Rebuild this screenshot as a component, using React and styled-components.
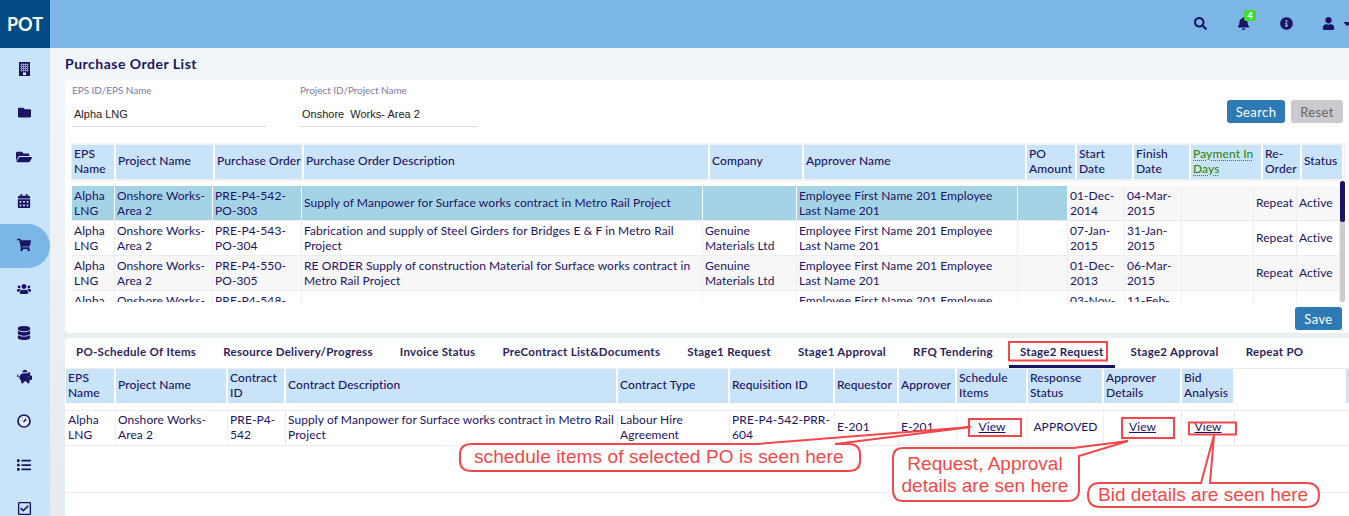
import React from 'react';
import styled, { createGlobalStyle } from 'styled-components';
import {
	FaFolder,
	FaFolderOpen,
	FaCalendarAlt,
	FaShoppingCart,
	FaUsers,
	FaDatabase,
	FaPiggyBank,
	FaList,
	FaRegCheckSquare,
	FaSearch,
	FaBell,
	FaInfoCircle,
	FaUser,
	FaCaretDown,
} from 'react-icons/fa';

const navy = '#1b1464';
const red = '#f4474a';

const GlobalStyle = createGlobalStyle`
	html, body {
		margin: 0;
		height: 516px;
		overflow: hidden;
		font-family: 'Lato', sans-serif;
		color: ${navy};
	}
	* {
		box-sizing: border-box;
	}
`;

const Page = styled.div`
	position: relative;
	display: grid;
	grid-template-columns: 50px 1fr;
	grid-template-rows: 48px 1fr;
	width: 1349px;
	height: 516px;
	overflow: hidden;
`;

const Logo = styled.div`
	display: flex;
	align-items: center;
	justify-content: center;
	background: #024b84;
	color: #fff;
	font-size: 18px;
	font-weight: 700;
`;

const TopBar = styled.header`
	display: flex;
	align-items: center;
	justify-content: flex-end;
	gap: 30px;
	margin-right: -5px;
	padding-bottom: 2px;
	background: #7cb6e7;
	font-size: 13px;
`;

const TopIcon = styled.span`
	position: relative;
	display: flex;
`;

const UserMenu = styled.span`
	display: flex;
	align-items: center;
	gap: 6px;
	margin-left: -1px;
`;

const Badge = styled.span`
	position: absolute;
	top: -7px;
	left: 7px;
	width: 12px;
	height: 11px;
	border-radius: 2px;
	background: #3fdc2c;
	color: #fff;
	font-size: 9px;
	font-weight: 700;
	line-height: 11px;
	text-align: center;
`;

const SideBar = styled.nav`
	background: #c9e4f9;
	overflow: hidden;
`;

const SideItem = styled.div`
	display: flex;
	align-items: center;
	justify-content: center;
	height: 44px;
	padding: 0 2px 3px 0;
	background: ${(p) => (p.$active ? '#7cb6e7' : 'transparent')};
	border-radius: ${(p) => (p.$active ? '0 22px 22px 0' : '0')};
`;

const Main = styled.main`
	min-width: 0;
	padding-left: 15px;
	background: linear-gradient(#f1f6f9, #e5ebee);
	overflow: hidden;
`;

const Title = styled.h1`
	height: 32px;
	margin: 0;
	padding-top: 7px;
	font-size: 14px;
	font-weight: 700;
	letter-spacing: 0.5px;
	line-height: 17px;
`;

const Panel = styled.section`
	background: #fff;
	border-radius: 4px 0 0 4px;
	margin-bottom: 5px;
	overflow: hidden;
	height: ${(p) => p.$height}px;
`;

const SearchRow = styled.div`
	display: flex;
	height: 63px;
	padding: 4px 6px 0 7px;
`;

const Field = styled.div`
	width: ${(p) => p.$width}px;
	margin-right: 34px;
`;

const FieldLabel = styled.div`
	color: #7d7ba8;
	font-size: 10px;
	letter-spacing: -0.05px;
	line-height: 12px;
`;

const FieldValue = styled.div`
	height: 25px;
	margin-top: 6px;
	padding: 5px 0 0 2px;
	border-bottom: 1px solid #dcdcdc;
	color: #222;
	font-family: 'Liberation Sans', sans-serif;
	font-size: 11px;
	line-height: 14px;
	white-space: pre;
`;

const Buttons = styled.div`
	display: flex;
	gap: 6px;
	margin: 16px 0 0 auto;
`;

const Button = styled.button`
	width: ${(p) => p.$width}px;
	height: 23px;
	padding: 0;
	border: 0;
	border-radius: 3px;
	background: ${(p) => (p.$muted ? '#c9cbd0' : '#2e7ab4')};
	color: ${(p) => (p.$muted ? '#666' : '#fff')};
	font-family: 'Lato', sans-serif;
	font-size: 13px;
	letter-spacing: 0.4px;
`;

const HeadWrap = styled.div`
	height: 38px;
	margin-left: 6px;
	width: 1275px;
	padding: 2px 0 2px 1px;
	background: #f2f2f2;
`;

const Row = styled.div`
	display: grid;
	grid-template-columns: ${(p) => p.$cols};
`;

const HeadCell = styled.div`
	display: flex;
	align-items: center;
	height: 34px;
	padding: 0 0 3px 2px;
	border-right: 2px solid #fff;
	background: #c9e4f9;
	font-size: 12px;
	font-weight: 500;
	letter-spacing: 0.1px;
	line-height: 15px;
	color: ${(p) => (p.$hint ? '#2e8b0e' : navy)};
`;

const Hint = styled.span`
	text-decoration: underline dotted #2e8b0e;
	text-underline-offset: 2px;
`;

const BodyArea = styled.div`
	display: flex;
	height: 121px;
	margin-left: 7px;
`;

const BodyScroll = styled.div`
	width: 1268px;
	padding-top: 5px;
	overflow: hidden;
`;

const BodyRow = styled(Row)`
	height: 35px;
	background: ${(p) => (p.$shade ? '#f7f7f7' : '#fff')};
	border-bottom: 1px solid #eee;
`;

const BodyCell = styled.div`
	display: flex;
	align-items: center;
	justify-content: ${(p) => (p.$center ? 'center' : 'flex-start')};
	height: 34px;
	padding: 0 0 1px ${(p) => (p.$center ? 0 : 2)}px;
	border-right: 1px solid ${(p) => (p.$selected ? '#fff' : '#eee')};
	background: ${(p) => (p.$selected ? '#a5d3e6' : 'transparent')};
	font-size: 12px;
	letter-spacing: 0.08px;
	line-height: 15px;
`;

const SubCell = styled(BodyCell)`
	padding-bottom: 3px;
`;

const Track = styled.div`
	width: 5px;
	height: 121px;
	border-radius: 3px;
	background: #ccc;
`;

const Thumb = styled.div`
	height: 41px;
	border-radius: 3px;
	background: ${navy};
`;

const SaveRow = styled.div`
	display: flex;
	justify-content: flex-end;
	padding: 5px 7px 0 0;
`;

const Tabs = styled.div`
	display: flex;
	gap: 5px;
	height: 31px;
	border-bottom: 1px solid #eee;
`;

const Tab = styled.div`
	height: 30px;
	padding: 7px 11px 0;
	border-bottom: 3px solid ${(p) => (p.$active ? navy : 'transparent')};
	font-size: 11.5px;
	font-weight: 700;
	letter-spacing: 0.3px;
	line-height: 14px;
	color: #2b2460;
	white-space: nowrap;
`;

const HeadRow2 = styled(Row)`
	margin-left: 1px;
`;

const BlankHead = styled.div`
	height: 34px;
	background: #fff;
`;

const SliverHead = styled.div`
	height: 34px;
	background: #c9e4f9;
`;

const BodyRow2 = styled(Row)`
	height: 36px;
	margin-top: 7px;
	margin-left: 1px;
	border-top: 1px solid #eee;
	border-bottom: 1px solid #eee;
`;

const EmptyRow = styled.div`
	height: 47px;
	border-bottom: 1px solid #eee;
`;

const ViewLink = styled.a`
	color: ${navy};
	text-decoration: underline;
`;

// screenshot annotations drawn on top of the page
const Notes = styled.svg`
	position: absolute;
	top: 0;
	left: 0;
	pointer-events: none;
`;

const NoteText = styled.text`
	fill: ${red};
	font-family: 'Liberation Sans', sans-serif;
	font-size: 19px;
`;

const NoteLine = styled.path`
	fill: ${(p) => (p.$filled ? '#fff' : 'none')};
	stroke: ${red};
	stroke-width: 2;
`;

const BuildingIcon = () => (
	<svg width='11' height='14' viewBox='0 0 11 14'>
		<rect width='11' height='14' fill={navy} />
		<path d='M1.5 2.5H9.5M1.5 4.5H9.5M1.5 6.5H9.5M1.5 8.5H9.5' stroke='#8d9cb2' />
		<path d='M2.5 1.5V9.5M4.5 1.5V9.5M6.5 1.5V9.5M8.5 1.5V9.5' stroke='#8d9cb2' />
		<rect x='4' y='10.5' width='3' height='2.5' fill='#e8f2fb' />
	</svg>
);

const GaugeIcon = () => (
	<svg width='14' height='14' viewBox='0 0 14 14'>
		<circle cx='7' cy='7' r='6' fill='#e8f2fb' stroke={navy} strokeWidth='1.7' />
		<path d='M3.5 6.5h1M5 4h1M8 4h1M9.5 6.5h1' stroke='#8d7fae' strokeWidth='1.2' />
		<path d='M6.5 8L9 5' stroke={navy} strokeWidth='1.4' />
	</svg>
);

const sideIcons = [
	{ Icon: BuildingIcon },
	{ Icon: FaFolder, size: 13 },
	{ Icon: FaFolderOpen, size: 16 },
	{ Icon: FaCalendarAlt, size: 14 },
	{ Icon: FaShoppingCart, size: 14 },
	{ Icon: FaUsers, size: 14 },
	{ Icon: FaDatabase, size: 14 },
	{ Icon: FaPiggyBank, size: 15 },
	{ Icon: GaugeIcon },
	{ Icon: FaList, size: 14 },
	{ Icon: FaRegCheckSquare, size: 15 },
];

const headCols = '44px 99px 89px 406px 94px 223px 50px 57px 57px 72px 39px 42px';
const bodyCols = '43px 98px 89px 401px 94px 221px 50px 57px 57px 72px 43px 43px';
const subCols = '50px 112px 58px 332px 112px 105px 64px 58px 71px 76px 78px 53px 111px 3px';

const poHead = [
	'EPS Name',
	'Project Name',
	'Purchase Order',
	'Purchase Order Description',
	'Company',
	'Approver Name',
	'PO Amount',
	'Start Date',
	'Finish Date',
	'Payment In Days',
	'Re-Order',
	'Status',
];

const employee = 'Employee First Name 201 Employee Last Name 201';

const poRows = [
	{
		order: 'PRE-P4-542-PO-303',
		desc: 'Supply of Manpower for Surface works contract in Metro Rail Project',
		company: '',
		start: '01-Dec-2014',
		finish: '04-Mar-2015',
		reorder: 'Repeat',
		status: 'Active',
	},
	{
		order: 'PRE-P4-543-PO-304',
		desc: 'Fabrication and supply of Steel Girders for Bridges E & F in Metro Rail Project',
		company: 'Genuine Materials Ltd',
		start: '07-Jan-2015',
		finish: '31-Jan-2015',
		reorder: 'Repeat',
		status: 'Active',
	},
	{
		order: 'PRE-P4-550-PO-305',
		desc: 'RE ORDER Supply of construction Material for Surface works contract in Metro Rail Project',
		company: 'Genuine Materials Ltd',
		start: '01-Dec-2013',
		finish: '06-Mar-2015',
		reorder: 'Repeat',
		status: 'Active',
	},
	{
		order: 'PRE-P4-548-PO-306',
		desc: '',
		company: '',
		start: '03-Nov-2014',
		finish: '11-Feb-2015',
		reorder: '',
		status: '',
	},
];

const tabs = [
	'PO-Schedule Of Items',
	'Resource Delivery/Progress',
	'Invoice Status',
	'PreContract List&Documents',
	'Stage1 Request',
	'Stage1 Approval',
	'RFQ Tendering',
	'Stage2 Request',
	'Stage2 Approval',
	'Repeat PO',
];

const subHead = [
	'EPS Name',
	'Project Name',
	'Contract ID',
	'Contract Description',
	'Contract Type',
	'Requisition ID',
	'Requestor',
	'Approver',
	'Schedule Items',
	'Response Status',
	'Approver Details',
	'Bid Analysis',
];

const App = () => {
	return (
		<React.Fragment>
			<GlobalStyle />
			<Page>
				<Logo>POT</Logo>
				<TopBar>
					<TopIcon>
						<FaSearch />
					</TopIcon>
					<TopIcon>
						<FaBell />
						<Badge>4</Badge>
					</TopIcon>
					<TopIcon>
						<FaInfoCircle />
					</TopIcon>
					<UserMenu>
						<FaUser />
						<FaCaretDown />
					</UserMenu>
				</TopBar>
				<SideBar>
					{sideIcons.map(({ Icon, size }, i) => (
						<SideItem key={i} $active={i === 4}>
							<Icon size={size} />
						</SideItem>
					))}
				</SideBar>
				<Main>
					<Title>Purchase Order List</Title>
					<Panel $height={253}>
						<SearchRow>
							<Field $width={194}>
								<FieldLabel>EPS ID/EPS Name</FieldLabel>
								<FieldValue>Alpha LNG</FieldValue>
							</Field>
							<Field $width={178}>
								<FieldLabel>Project ID/Project Name</FieldLabel>
								<FieldValue>Onshore  Works- Area 2</FieldValue>
							</Field>
							<Buttons>
								<Button $width={58}>Search</Button>
								<Button $width={52} $muted>
									Reset
								</Button>
							</Buttons>
						</SearchRow>
						<HeadWrap>
							<Row $cols={headCols}>
								{poHead.map((h) => (
									<HeadCell key={h} $hint={h === 'Payment In Days'}>
										{h === 'Payment In Days' ? <Hint>{h}</Hint> : <span>{h}</span>}
									</HeadCell>
								))}
							</Row>
						</HeadWrap>
						<BodyArea>
							<BodyScroll>
								{poRows.map((r, i) => (
									<BodyRow key={r.order} $cols={bodyCols} $shade={i % 2 === 0}>
										{['Alpha LNG', 'Onshore Works- Area 2', r.order, r.desc, r.company, employee, ''].map(
											(text, c) => (
												<BodyCell key={c} $selected={i === 0}>
													<span>{text}</span>
												</BodyCell>
											)
										)}
										<BodyCell>{r.start}</BodyCell>
										<BodyCell>{r.finish}</BodyCell>
										<BodyCell />
										<BodyCell>{r.reorder}</BodyCell>
										<BodyCell>{r.status}</BodyCell>
									</BodyRow>
								))}
							</BodyScroll>
							<Track>
								<Thumb />
							</Track>
						</BodyArea>
						<SaveRow>
							<Button $width={47}>Save</Button>
						</SaveRow>
					</Panel>
					<Panel $height={178}>
						<Tabs>
							{tabs.map((t) => (
								<Tab key={t} $active={t === 'Stage2 Request'}>
									{t}
								</Tab>
							))}
						</Tabs>
						<HeadRow2 $cols={subCols}>
							{subHead.map((h) => (
								<HeadCell key={h}>
									<span>{h}</span>
								</HeadCell>
							))}
							<BlankHead />
							<SliverHead />
						</HeadRow2>
						<BodyRow2 $cols={subCols}>
							<SubCell>Alpha LNG</SubCell>
							<SubCell>Onshore Works- Area 2</SubCell>
							<SubCell>PRE-P4-542</SubCell>
							<SubCell>Supply of Manpower for Surface works contract in Metro Rail Project</SubCell>
							<SubCell>Labour Hire Agreement</SubCell>
							<SubCell>PRE-P4-542-PRR-604</SubCell>
							<SubCell>E-201</SubCell>
							<SubCell>E-201</SubCell>
							<SubCell $center>
								<ViewLink href='#'>View</ViewLink>
							</SubCell>
							<SubCell $center>APPROVED</SubCell>
							<SubCell $center>
								<ViewLink href='#'>View</ViewLink>
							</SubCell>
							<SubCell $center>
								<ViewLink href='#'>View</ViewLink>
							</SubCell>
						</BodyRow2>
						<EmptyRow />
					</Panel>
				</Main>
				<Notes width='1349' height='516' viewBox='0 0 1349 516'>
					<NoteLine d='M1009 342H1107V360.5H1009Z' />
					<NoteLine d='M969 419H1021V436H969Z' />
					<NoteLine d='M1122 418H1174V438H1122Z' />
					<NoteLine d='M1189 422.5H1236V434.5H1189Z' />
					<NoteLine
						$filled
						d='M757 444L971 427L835 444H848Q860 444 860 454V461Q860 471 848 471H472Q460 471 460 461V454Q460 444 472 444Z'
					/>
					<NoteLine
						$filled
						d='M1073 448L1128 441L1079 456V490Q1079 501 1067 501H903Q893 501 893 490V458Q893 448 903 448Z'
					/>
					<NoteLine
						$filled
						d='M1201 483L1214 435L1210 483H1306Q1319 483 1319 495Q1319 507 1306 507H1100Q1088 507 1088 495Q1088 483 1100 483Z'
					/>
					<NoteText x='474' y='463' letterSpacing='0.1'>
						schedule items of selected PO is seen here
					</NoteText>
					<NoteText x='985' y='470' textAnchor='middle'>
						Request, Approval
					</NoteText>
					<NoteText x='985' y='492' textAnchor='middle'>
						details are sen here
					</NoteText>
					<NoteText x='1098' y='501'>
						Bid details are seen here
					</NoteText>
				</Notes>
			</Page>
		</React.Fragment>
	);
};

export default App;
